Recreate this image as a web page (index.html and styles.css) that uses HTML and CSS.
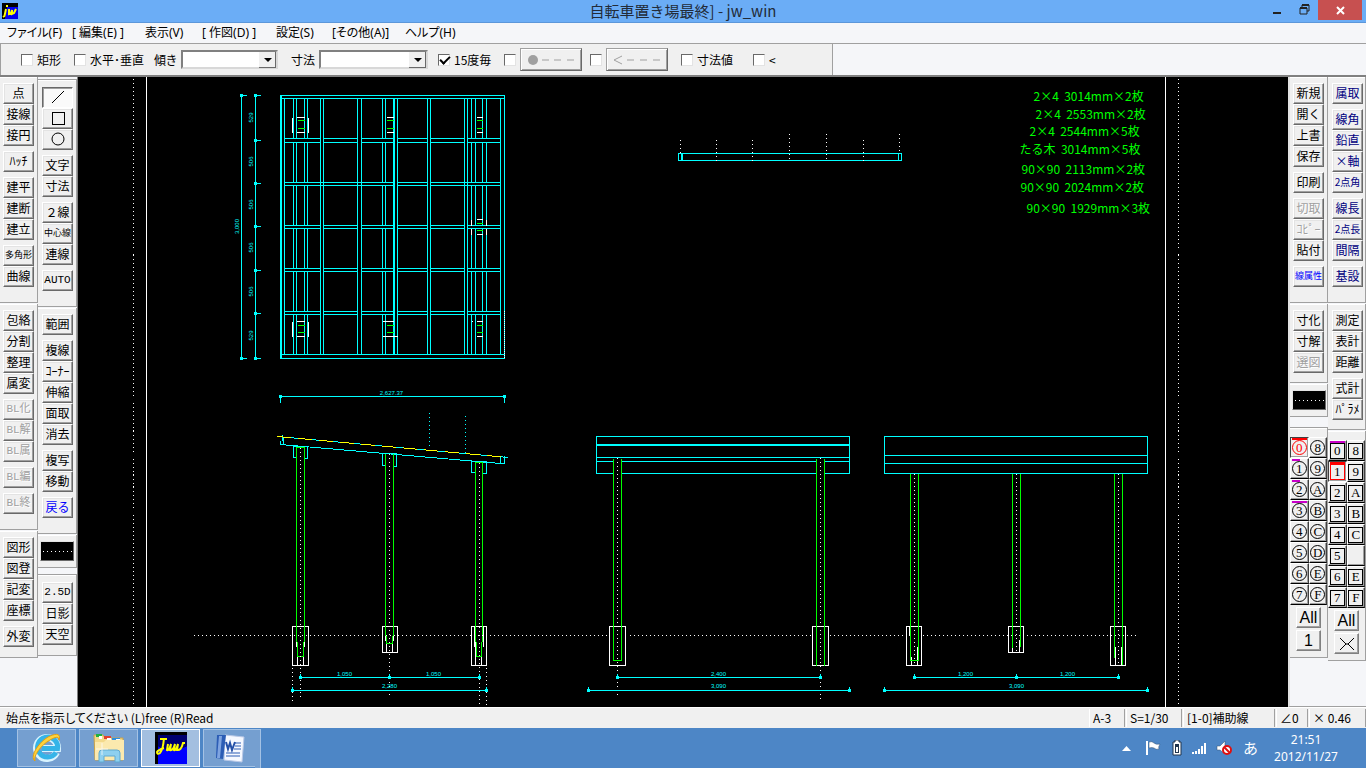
FILE: index.html
```html
<!DOCTYPE html>
<html lang="ja">
<head>
  <meta charset="UTF-8" />
  <meta name="viewport" content="width=device-width, initial-scale=1.0"/>
  <title>自転車置き場最終] - jw_win</title>
  <link rel="stylesheet" href="styles.css">
</head>
<body>

  <header class="titlebar">
    <svg class="app-icon" viewBox="0 0 16 16">
      <rect width="16" height="16" fill="#000"/>
      <path d="M5 4h11v12H3z" fill="#0000f0"/>
      <path d="M4 3h2M4 6L2.500 13L1 14M7 6l0 5l2-1l1-3l0 4l2-1l2-4" fill="none" stroke="#ff0" stroke-width="2"/>
    </svg>
    <h1>自転車置き場最終] - jw_win</h1>
    <div class="window-buttons">
      <button aria-label="最小化"><svg width="10" height="10"><path d="M0 8h8" stroke="#222" stroke-width="2"/></svg></button>
      <button aria-label="元に戻す"><svg width="12" height="12"><path d="M3 3V1h7v6H8M1 4h7v6H1z" fill="none" stroke="#222"/><path d="M3 1h7M1 4h7" stroke="#222" stroke-width="2"/></svg></button>
      <button class="close" aria-label="閉じる"><svg width="9" height="9"><path d="M1 1l7 7M8 1L1 8" stroke="#fff" stroke-width="2"/></svg></button>
    </div>
  </header>

  <nav class="menu">
    <a href="#">ファイル(F)</a>
    <a href="#">[ 編集(E) ]</a>
    <a href="#">表示(V)</a>
    <a href="#">[ 作図(D) ]</a>
    <a href="#">設定(S)</a>
    <a href="#">[その他(A)]</a>
    <a href="#">ヘルプ(H)</a>
  </nav>

  <div class="options-row">
    <form class="options">
      <label><input type="checkbox">矩形</label>
      <label><input type="checkbox">水平･垂直</label>
      <label class="combo">傾き<span class="select angle"><select><option></option></select></span></label>
      <label class="combo">寸法<span class="select size"><select><option></option></select></span></label>
      <label><input type="checkbox" checked>15度毎</label>
      <div class="toggle"><input type="checkbox" aria-label="端点"><button type="button" disabled aria-label="点"><svg width="48" height="12"><circle cx="6" cy="6" r="5" fill="#a0a0a0"/><path d="M15 6h7M27 6h7M40 6h7" stroke="#a0a0a0"/></svg></button></div>
      <div class="toggle"><input type="checkbox" aria-label="矢印"><button type="button" disabled aria-label="矢"><svg width="48" height="12"><path d="M9 2L1 6l8 4M14 6h7M27 6h7M40 6h7" fill="none" stroke="#a0a0a0"/></svg></button></div>
      <label><input type="checkbox">寸法値</label>
      <label><input type="checkbox">&lt;</label>
    </form>
  </div>

  <main class="workspace">
    <aside class="column left-outer">
      <section class="panel">
        <div class="group"><button>点</button><button>接線</button><button>接円</button></div>
        <div class="group"><button>ﾊｯﾁ</button></div>
        <div class="group"><button>建平</button><button>建断</button><button>建立</button></div>
        <div class="group"><button class="small">多角形</button><button>曲線</button></div>
      </section>
      <section class="panel">
        <div class="group"><button>包絡</button><button>分割</button><button>整理</button><button>属変</button></div>
        <div class="group"><button class="latin" disabled>BL化</button><button class="latin" disabled>BL解</button><button class="latin" disabled>BL属</button></div>
        <div class="group"><button class="latin" disabled>BL編</button></div>
        <div class="group"><button class="latin" disabled>BL終</button></div>
      </section>
      <section class="panel short">
        <div class="group"><button>図形</button><button>図登</button><button>記変</button><button>座標</button></div>
        <div class="group"><button>外変</button></div>
      </section>
    </aside>

    <aside class="column left-inner">
      <section class="panel topped">
        <div class="group">
          <button class="pressed" aria-label="線"><svg width="14" height="14"><path d="M1 13L13 1" stroke="#000"/></svg></button>
          <button aria-label="矩形"><svg width="14" height="14" shape-rendering="crispEdges"><path d="M1 1h12v12H1z" fill="none" stroke="#000"/></svg></button>
          <button aria-label="円"><svg width="14" height="14"><circle cx="7" cy="7" r="6" fill="none" stroke="#000"/></svg></button>
        </div>
        <div class="group"><button>文字</button><button>寸法</button></div>
        <div class="group"><button>２線</button><button class="small">中心線</button><button>連線</button></div>
        <div class="group"><button class="latin">AUTO</button></div>
      </section>
      <section class="panel">
        <div class="group"><button>範囲</button></div>
        <div class="group"><button>複線</button><button>ｺｰﾅｰ</button><button>伸縮</button><button>面取</button><button>消去</button></div>
        <div class="group"><button>複写</button><button>移動</button></div>
        <div class="group"><button class="blue">戻る</button></div>
      </section>
      <section class="panel swatch-panel"><button class="swatch" aria-label="線種"></button></section>
      <div class="spacer"></div>
      <section class="panel topped short">
        <div class="group"><button class="latin">2.5D</button><button>日影</button><button>天空</button></div>
      </section>
    </aside>

    <!-- drawing coordinates are window pixels -->
    <svg class="canvas" viewBox="77.500 76.500 1210 630" preserveAspectRatio="xMidYMid meet">
      <defs>
        <g id="node"><rect x="-1.500" y="-1.500" width="3" height="3" fill="#0ff" stroke="none"/></g>
      </defs>

      <!-- sheet edges -->
      <path class="white" d="M146 76V707M1165 76V707"/>
      <path class="white dots" d="M133 78V707M1178 78V707"/>

      <!-- plan -->
      <g class="cyan">
        <path d="M280 95H504V358H280zM281 95V358M280 98H504M280 354H504M284 98V354M500 98V354"/>
        <path d="M320 98V354M323 98V354M357 98V354M361 98V354M393 98V354M394 98V354M397 98V354M427 98V354M430 98V354M464 98V354M467 98V354"/>
        <path d="M284 138H320M323 138H357M361 138H393M397 138H427M430 138H464M467 138H500M284 142H320M323 142H357M361 142H393M397 142H427M430 142H464M467 142H500"/>
        <path d="M284 182H393M397 182H427M430 182H500M284 185H393M397 185H427M430 185H500"/>
        <path d="M284 225H320M323 225H357M361 225H393M397 225H427M430 225H464M467 225H500M284 228H320M323 228H357M361 228H393M397 228H427M430 228H464M467 228H500"/>
        <path d="M284 268H320M323 268H357M361 268H393M397 268H427M430 268H464M467 268H500M284 271H320M323 271H357M361 271H393M397 271H427M430 271H464M467 271H500"/>
        <path d="M284 311H320M323 311H357M361 311H393M397 311H427M430 311H464M467 311H500M284 314H320M323 314H357M361 314H393M397 314H427M430 314H464M467 314H500"/>
        <path d="M293 98V138M293 142V182M293 185V225M293 228V268M293 271V311M293 314V354M296 98V138M296 142V182M296 185V225M296 228V268M296 271V311M296 314V354"/>
        <path d="M304 98V138M304 142V182M304 185V225M304 228V268M304 271V311M304 314V354M307 98V138M307 142V182M307 185V225M307 228V268M307 271V311M307 314V354"/>
        <path d="M382 98V138M382 142V182M382 185V225M382 228V268M382 271V311M382 314V354M385 98V138M385 142V182M385 185V225M385 228V268M385 271V311M385 314V354"/>
        <path d="M471 98V138M471 142V182M471 185V225M471 228V268M471 271V311M471 314V354M475 98V138M475 142V182M475 185V225M475 228V268M475 271V311M475 314V354"/>
        <path d="M482 98V138M482 142V182M482 185V225M482 228V268M482 271V311M482 314V354M486 98V138M486 142V182M486 185V225M486 228V268M486 271V311M486 314V354"/>
      </g>
      <path class="white" d="M292 117V132M308 117V132M296 117H304M296 132H304M386 117H393M386 132H393M476 117H482M476 132H482M292 321V336M308 321V336M296 321H304M296 336H304M382 321H393M382 336H397M471 321H472M476 321H482M476 336H482M471 219V225M486 219V225M471 228V234M486 228V234M476 219H482M476 234H482"/>
      <path class="green" d="M297 120H304M297 128H304M386 120H393M386 128H393M476 120H482M476 128H482M297 325H304M297 332H304M386 325H393M386 332H393M476 325H482M476 332H482M476 223H482M476 230H482"/>
      <path class="white fine" d="M504 310V358"/>

      <!-- plan dimensions -->
      <g class="cyan">
        <path d="M241 95V358M255 95V358M241 95h5M241 358h5M255 95h5M255 140h5M255 183h5M255 226h5M255 270h5M255 313h5M255 358h5M280 396H504M280 396v6M504 396v6"/>
        <use href="#node" x="241" y="95"/><use href="#node" x="241" y="358"/>
        <use href="#node" x="255" y="95"/><use href="#node" x="255" y="140"/><use href="#node" x="255" y="183"/><use href="#node" x="255" y="226"/>
        <use href="#node" x="255" y="270"/><use href="#node" x="255" y="313"/><use href="#node" x="255" y="358"/>
        <use href="#node" x="280" y="396"/><use href="#node" x="504" y="396"/>
      </g>
      <g class="dim">
        <text transform="translate(252 117) rotate(-90)">529</text>
        <text transform="translate(252 161) rotate(-90)">506</text>
        <text transform="translate(252 204) rotate(-90)">506</text>
        <text transform="translate(252 247) rotate(-90)">506</text>
        <text transform="translate(252 291) rotate(-90)">506</text>
        <text transform="translate(252 335) rotate(-90)">529</text>
        <text transform="translate(238 226) rotate(-90)">3,000</text>
        <text x="391" y="394">2,627.37</text>
      </g>

      <!-- rafter -->
      <path class="cyan" d="M678 153H901V160H678zM681 153V160M682 153V160M898 153V160"/>
      <path class="white dots" d="M680 139V152M716 139V160M752 139V160M789 133V160M826 133V160M863 139V160M899 133V152"/>

      <!-- side elevation -->
      <g class="cyan">
        <path d="M277 436L508 457M280 444L500 463M280 444V440M283 436V444M282 434V440M500 455V463H504V455"/>
        <path d="M296 457H293V446H307V458H304M385 465H382V453H396V466H393M475 472H471V461H486V473H482"/>
      </g>
      <path class="yellow" d="M277 436L508 457"/>
      <path class="cyan dots" d="M429 412V448M465 415V452"/>
      <path class="white" d="M292 626H308V665H292zM297 656V665M303 656V665M296 641V646M304 641V646M382 626H397V652H382zM386 643V652M392 643V652M385 635V640M393 635V640M471 626H486V665H471zM474 626V646M483 626V646M475 641V665M481 641V665"/>
      <path class="green" d="M296 641V447H304V641M297 641V656H303V641M385 635V453M393 453V635M386 635V643H392V635M475 641V462H482V641M476 641V656H481V641"/>
      <path class="white dots" d="M300 447V696M389 453V695M479 462V706M292 667V700M486 667V704"/>
      <path class="white dots" d="M193 635H606M629 635H810M829 635H904M922 635H1138"/>

      <!-- front elevation -->
      <path class="cyan" d="M596 473V436H849V473M596 444H849M596 445H849M596 457H849M596 461H613M621 461H816M824 461H849M596 473H613M621 473H816M824 473H849"/>
      <path class="white" d="M609 626H625V665H609zM812 626H828V665H812z"/>
      <path class="green" d="M613 458V660H621V458M816 458V665M824 458V665"/>
      <path class="white dots" d="M617 457V694M820 457V701"/>

      <!-- rear elevation -->
      <path class="cyan" d="M884 436H1147V473H884zM884 455H1147M884 463H1147"/>
      <path class="white" d="M906 626H921V665H906zM909 626V635M911 656V665M917 646V665M1008 626H1023V652H1008zM1012 647V652M1019 639V652M1110 626H1125V665H1110zM1115 646V665M1121 646V665"/>
      <path class="green" d="M910 473V660H918V473M1012 473V647M1020 473V646M1114 473V657M1122 473V664"/>
      <path class="white dots" d="M914 473V665M1016 473V652M1118 473V665"/>

      <!-- elevation dimensions -->
      <g class="cyan">
        <path d="M300 677H479M300 677v-4M389 677v-4M479 677v-4M292 690H486M292 690v-4M486 690v-4"/>
        <path d="M617 677H820M617 677v-4M820 677v-4M588 690H849M588 690v-4M849 690v-4"/>
        <path d="M914 677H1118M914 677v-4M1016 677v-4M1118 677v-4M884 690H1147M884 690v-4M1147 690v-4"/>
        <use href="#node" x="300" y="677"/><use href="#node" x="389" y="677"/><use href="#node" x="479" y="677"/>
        <use href="#node" x="292" y="690"/><use href="#node" x="486" y="690"/>
        <use href="#node" x="617" y="677"/><use href="#node" x="820" y="677"/><use href="#node" x="588" y="690"/><use href="#node" x="849" y="690"/>
        <use href="#node" x="914" y="677"/><use href="#node" x="1016" y="677"/><use href="#node" x="1118" y="677"/>
        <use href="#node" x="884" y="690"/><use href="#node" x="1147" y="690"/>
      </g>
      <g class="dim">
        <text x="344" y="675">1,050</text><text x="433" y="675">1,050</text><text x="389" y="687">2,280</text>
        <text x="718" y="675">2,400</text><text x="718" y="687">3,090</text>
        <text x="965" y="675">1,200</text><text x="1067" y="675">1,200</text><text x="1016" y="687">3,090</text>
      </g>

      <!-- cutting list -->
      <g class="list">
        <text x="1033" y="100">2×4&nbsp; 3014mm×2枚</text>
        <text x="1035" y="118">2×4&nbsp; 2553mm×2枚</text>
        <text x="1029" y="135">2×4&nbsp; 2544mm×5枚</text>
        <text x="1019" y="153">たる木&nbsp; 3014mm×5枚</text>
        <text x="1021" y="173">90×90&nbsp; 2113mm×2枚</text>
        <text x="1020" y="191">90×90&nbsp; 2024mm×2枚</text>
        <text x="1026" y="212">90×90&nbsp; 1929mm×3枚</text>
      </g>
    </svg>

    <aside class="column right-inner">
      <section class="panel">
        <div class="group"><button>新規</button><button>開く</button><button>上書</button><button>保存</button></div>
        <div class="group"><button>印刷</button></div>
        <div class="group"><button disabled>切取</button><button disabled>ｺﾋﾟｰ</button><button>貼付</button></div>
        <div class="group"><button class="small blue">線属性</button></div>
      </section>
      <section class="panel tight">
        <div class="group"><button>寸化</button><button>寸解</button><button disabled>選図</button></div>
      </section>
      <section class="panel swatch-panel"><button class="swatch" aria-label="線属性"></button></section>
      <div class="spacer"></div>
      <section class="panel layers">
        <div class="layer-grid round">
          <button class="current bar"><span>0</span></button><button><span>8</span></button>
          <button class="bar half"><span>1</span></button><button><span>9</span></button>
          <button class="bar half"><span>2</span></button><button><span>A</span></button>
          <button class="bar"><span>3</span></button><button><span>B</span></button>
          <button><span>4</span></button><button><span>C</span></button>
          <button><span>5</span></button><button><span>D</span></button>
          <button><span>6</span></button><button><span>E</span></button>
          <button><span>7</span></button><button><span>F</span></button>
        </div>
        <button class="all">All</button>
        <button class="all">1</button>
      </section>
    </aside>

    <aside class="column right-outer">
      <section class="panel navy">
        <div class="group"><button>属取</button></div>
        <div class="group"><button>線角</button><button>鉛直</button><button>×軸</button><button class="mixed">2点角</button></div>
        <div class="group"><button>線長</button><button class="mixed">2点長</button><button>間隔</button></div>
        <div class="group"><button>基設</button></div>
      </section>
      <section class="panel tight">
        <div class="group"><button>測定</button><button>表計</button><button>距離</button></div>
        <div class="group"><button>式計</button><button>ﾊﾟﾗﾒ</button></div>
      </section>
      <section class="panel layers">
        <div class="layer-grid">
          <button class="bar"><span>0</span></button><button><span>8</span></button>
          <button class="current bar"><span>1</span></button><button><span>9</span></button>
          <button><span>2</span></button><button><span>A</span></button>
          <button><span>3</span></button><button><span>B</span></button>
          <button><span>4</span></button><button><span>C</span></button>
          <button><span>5</span></button><button aria-label="D"></button>
          <button><span>6</span></button><button><span>E</span></button>
          <button><span>7</span></button><button><span>F</span></button>
        </div>
        <button class="all">All</button>
        <button class="all" aria-label="×"><svg width="16" height="14"><path d="M1 1l6 6l-6 6M15 1l-6 6l6 6M7 7h2" fill="none" stroke="#000"/></svg></button>
      </section>
    </aside>
  </main>

  <footer class="status">
    <p>始点を指示してください (L)free (R)Read</p>
    <span>A-3</span>
    <span>S=1/30</span>
    <span>[1-0]補助線</span>
    <span>∠0</span>
    <span>× 0.46</span>
  </footer>

  <div class="taskbar">
    <button aria-label="Internet Explorer">
      <svg width="32" height="32" viewBox="0 0 32 32">
        <path d="M25.500 20.500A10.500 10.500 0 1 1 26.500 16.500H11" fill="none" stroke="#d9f4ff" stroke-width="7"/>
        <path d="M25 20.500A10 10 0 1 1 26.500 16.500H11" fill="none" stroke="#35b4e8" stroke-width="5"/>
        <path d="M4 29C-2 25 8 9 19 4c7-3 11-2 9 4C28 4 24 5 19 8 10 13 2 24 4 29z" fill="#ffd23c" stroke="#e3a010"/>
      </svg>
    </button>
    <button aria-label="エクスプローラー">
      <svg width="34" height="32" viewBox="0 0 34 32">
        <path d="M2 3h9l2 3h18v22H3z" fill="#f3d98a" stroke="#c9a24a"/>
        <path d="M4 2h6v3H4z" fill="#20b040"/><path d="M12 4h7v3h-7z" fill="#e04030"/><path d="M20 6h8v3h-8z" fill="#2d8fe0"/>
        <path d="M7 4h3v3H7zM15 6h4v2h-4zM24 7h4v2h-4z" fill="#fff"/>
        <path d="M3 10h9l2-2h18v20H3z" fill="#fbe9ae"/>
        <path d="M7 30V21q0-3 3-3h15q3 0 3 3v9h-5v-6H12v6z" fill="#8ed0ef" stroke="#5fa9d0"/>
        <path d="M10 11v12M4 17h12" stroke="#fff" opacity=".7"/>
      </svg>
    </button>
    <button class="active" aria-label="Jww">
      <svg width="32" height="32" viewBox="0 0 32 32">
        <path d="M0 0h32v32H0z"/><path d="M3 14q13 8 29 0v18H3z" fill="#0000ff"/>
        <path d="M3 3h29v11q-14 8-29 0z" fill="#000070"/>
        <path d="M5 7h7M9 6q-1 12-4 15q-3 2-3-1q1-2 7-4M13 12l-1 6q2 1 4-6l-1 6q3 1 5-6M20 12l-1 6q2 1 4-6l-1 6q4 1 6-7h2" fill="none" stroke="#ff0" stroke-width="2"/>
      </svg>
    </button>
    <button class="stacked" aria-label="Word">
      <svg width="30" height="30" viewBox="0 0 30 30">
        <path d="M10 2l19 2-2 25-18-2z" fill="#f5f8ff" stroke="#b9c8e6"/>
        <path d="M2 2h9L8 26l-7-1z" fill="#2c5db5"/><path d="M4 3h3L5 25H2z" fill="#7fa4e0"/>
        <path d="M11 9l2 7 2-6 2 7 3-8" fill="none" stroke="#2450a8" stroke-width="2"/>
        <path d="M20 10h6M20 13h6M19 16h7M11 20h14M11 23h14" stroke="#2c5db5"/>
      </svg>
    </button>
    <div class="tray">
      <svg class="more" width="9" height="5"><path d="M0 5L4.500 0L9 5z" fill="#fff"/></svg>
      <svg width="18" height="16"><path d="M2 1v14" stroke="#fff" stroke-width="2"/><path d="M4 2q3-1 5 1q2 2 6 1q-2 3-1 5q-3 1-5-1q-2-1-5 0z" fill="#fff" stroke="#34506e" stroke-width=".5"/></svg>
      <svg width="10" height="16"><path d="M3 0h4v2h2v13H1V2h2z" fill="#fff" stroke="#20344c"/><path d="M3 4h4v9H3z" fill="#20344c"/><path d="M4 7h2v5H4z" fill="#fff"/></svg>
      <svg width="16" height="12"><path d="M1 12v-2h2v2zM4 12V9h2v3zM7 12V7h2v5zM10 12V4h2v8zM13 12V1h2v11z" fill="#fff"/></svg>
      <svg width="18" height="16"><path d="M1 6h3l5-5v13l-5-4H1z" fill="#fff" stroke="#34506e" stroke-width=".5"/><circle cx="11" cy="10" r="4" fill="#fff" stroke="#e01010" stroke-width="2"/><path d="M8 7l6 6" stroke="#e01010" stroke-width="2"/></svg>
      <span class="ime">あ</span>
      <time>21:51<br>2012/11/27</time>
    </div>
  </div>

</body>
</html>
```

FILE: styles.css
```css
* {
  box-sizing: border-box;
}

body {
  margin: 0;
  min-height: 100vh;
  display: flex;
  flex-direction: column;
  font-family: "Noto Sans CJK JP", sans-serif;
  font-size: 12px;
  line-height: 16px;
  color: #000;
  background: #f5f6f9;
}

button {
  font: inherit;
  color: inherit;
  padding: 0;
  margin: 0;
  border: none;
  background: none;
  display: flex;
  align-items: center;
  justify-content: center;
  white-space: nowrap;
}

svg {
  display: block;
  flex: none;
}

/* title bar */
.titlebar {
  height: 23px;
  display: grid;
  grid-template-columns: 120px 1fr 120px;
  align-items: center;
  background: #6badf6;
  border-bottom: 1px solid #5c97da;
}

.app-icon {
  width: 16px;
  height: 16px;
  margin-left: 2px;
}

.titlebar h1 {
  margin: 0;
  font-size: 15px;
  font-weight: 400;
  line-height: 22px;
  text-align: center;
  color: #222b38;
}

.window-buttons {
  align-self: start;
  display: flex;
  justify-content: flex-end;
  padding-right: 4px;
}

.window-buttons button {
  width: 27px;
  height: 20px;
}

.window-buttons .close {
  width: 44px;
  background: #c75050;
}

/* menu */
.menu {
  height: 21px;
  display: grid;
  grid-template-columns: 65px 73px 57px 74px 56px 73px auto;
  align-items: center;
  padding-left: 7px;
  border-bottom: 1px solid #a0a0a0;
  font-family: "Noto Sans", "Noto Sans CJK JP", sans-serif;
  font-feature-settings: "palt";
}

.menu a {
  color: #000;
  text-decoration: none;
  white-space: pre;
}

/* option bar */
.options-row {
  height: 33px;
  border-bottom: 2px solid #808080;
}

.options {
  width: 833px;
  height: 31px;
  display: grid;
  grid-template-columns: 53px 80px 137px 147px 66px 86px 91px 72px 1fr;
  align-items: center;
  padding-left: 20px;
  background: #f0f0f0;
  border-left: 1px solid #a0a0a0;
  border-right: 1px solid #a0a0a0;
}

.options label,
.toggle {
  display: flex;
  align-items: center;
  gap: 4px;
  white-space: nowrap;
  font-feature-settings: "palt";
}

.options input {
  appearance: none;
  flex: none;
  width: 12px;
  height: 12px;
  margin: 0;
  background: #fff;
  border: 1px solid;
  border-color: #696969 #e3e3e3 #e3e3e3 #696969;
}

.options input:checked::after {
  content: "";
  display: block;
  width: 8px;
  height: 4px;
  margin: 1px;
  border-left: 2px solid #000;
  border-bottom: 2px solid #000;
  transform: rotate(-45deg);
}

.toggle button {
  width: 62px;
  height: 23px;
  background: #f0f0f0;
  border: 1px solid;
  border-color: #a0a0a0 #696969 #696969 #a0a0a0;
  box-shadow: inset 1px 1px #fff, inset -1px -1px #a0a0a0;
}

.select {
  position: relative;
  height: 19px;
}

.angle {
  width: 97px;
}

.size {
  width: 109px;
}

.select select {
  appearance: none;
  display: block;
  width: 100%;
  height: 19px;
  margin: 0;
  border: 2px solid;
  border-color: #808080 #d8d8d8 #d8d8d8 #808080;
  border-radius: 0;
  background: #fff;
}

.select::before {
  content: "";
  position: absolute;
  top: 2px;
  right: 2px;
  width: 16px;
  height: 15px;
  background: #f0f0f0;
  border-right: 1px solid #696969;
  border-bottom: 1px solid #696969;
  pointer-events: none;
}

.select::after {
  content: "";
  position: absolute;
  top: 8px;
  right: 6px;
  border: 4px solid transparent;
  border-top-color: #000;
  border-bottom: none;
  pointer-events: none;
}

/* work area */
.workspace {
  flex: 1;
  display: grid;
  grid-template-columns: 38px 40px 1fr 40px 38px;
}

.column {
  border-bottom: 1px solid #a0a0a0;
}

.left-inner {
  padding-top: 2px;
  border-right: 1px solid #808080;
}

.right-inner {
  border-left: 2px solid #e3e3e3;
}

.panel {
  padding: 6px 0 15px 3px;
  background: #f0f0f0;
  border-right: 1px solid #a0a0a0;
  border-bottom: 1px solid #a0a0a0;
  box-shadow: inset 0 1px #fff;
  margin-bottom: 1px;
}

.left-inner .panel,
.right-outer .panel {
  padding-left: 4px;
}

.panel.short {
  padding-bottom: 10px;
}

.panel.tight {
  padding-bottom: 9px;
}

.panel.topped {
  padding-top: 7px;
  border-top: 1px solid #a0a0a0;
}

.group + .group {
  margin-top: 5px;
}

.group button {
  width: 31px;
  height: 21px;
  padding-bottom: 2px;
  line-height: 16px;
  background: #f0f0f0;
  border: 1px solid;
  border-color: #fff #696969 #696969 #fff;
  box-shadow: inset -1px -1px #a0a0a0, inset 1px 1px #e3e3e3;
}

.group .pressed {
  background: #fafafa;
  border-color: #696969 #fff #fff #696969;
  box-shadow: inset 1px 1px #a0a0a0;
}

.group button:disabled {
  color: #a0a0a0;
  text-shadow: 1px 1px #fff;
}

.group .small {
  font-size: 9px;
}

.group .mixed {
  font-size: 10px;
}

.group .latin {
  font-family: "Liberation Mono", "Noto Sans CJK JP", monospace;
  font-size: 11px;
}

.group .blue {
  color: #00f;
}

.navy {
  color: #000080;
}

.left-inner .swatch-panel,
.swatch-panel {
  padding: 6px 0 6px 2px;
}

.swatch {
  width: 34px;
  height: 20px;
  background: #000;
  border: 1px solid;
  border-color: #e3e3e3 #696969 #696969 #e3e3e3;
}

.swatch::after {
  content: "";
  width: 29px;
  height: 1px;
  background: repeating-linear-gradient(90deg, #fff 0 1px, #000 1px 4px);
}

.spacer {
  height: 5px;
}

.right-inner .spacer {
  height: 9px;
}

/* layer buttons */
.right-inner .layers,
.right-outer .layers {
  padding: 9px 0 4px;
}

.right-inner .layers {
  border-top: 1px solid #a0a0a0;
}

.layer-grid {
  display: grid;
  grid-template-columns: 1fr 1fr;
  margin-bottom: 2px;
}

.layer-grid button {
  position: relative;
  height: 21px;
  background: #f0f0f0;
  border: 1px solid;
  border-color: #fff #404040 #000 #fff;
  box-shadow: inset -1px -1px #a0a0a0;
}

.layer-grid span {
  width: 15px;
  height: 16px;
  border: 1px solid #000;
  font-family: "Liberation Serif", serif;
  font-size: 13px;
  line-height: 14px;
  text-align: center;
}

.round span {
  height: 15px;
  line-height: 13px;
  border-radius: 8px;
}

.layer-grid .bar::before {
  content: "";
  position: absolute;
  top: 0;
  left: 1px;
  width: 15px;
  height: 2px;
  background: #c800c8;
}

.layer-grid .half::before {
  width: 8px;
}

.layer-grid .current {
  border-color: #404040 #fff #fff #404040;
}

.layer-grid .current::before {
  background: #f00;
}

.layer-grid .current span {
  border-color: #f00;
}

.round .current span {
  color: #f00;
}

.all {
  width: 25px;
  height: 21px;
  margin: 0 0 2px 6px;
  font-size: 16px;
  font-family: "Liberation Sans", sans-serif;
  background: #f0f0f0;
  border: 1px solid;
  border-color: #fff #808080 #808080 #fff;
  box-shadow: inset -1px -1px #a0a0a0;
}

/* drawing */
.canvas {
  width: 100%;
  height: 100%;
  background: #000;
  shape-rendering: crispEdges;
  fill: none;
  stroke-width: 1;
}

.cyan {
  stroke: #0ff;
}

.green {
  stroke: #0f0;
}

.white {
  stroke: #fff;
}

.yellow {
  stroke: #ff0;
  stroke-dasharray: 14 7;
}

.dots {
  stroke-dasharray: 1 3;
}

.fine {
  stroke-dasharray: 1 1;
}

.dim text {
  font-family: "Liberation Sans", sans-serif;
  font-size: 6px;
  fill: #0ff;
  text-anchor: middle;
}

.list text {
  font-size: 12px;
  fill: #0f0;
}

/* status bar */
.status {
  height: 21px;
  display: grid;
  grid-template-columns: 1fr 36px 56px 92px 32px 57px;
  align-items: center;
  gap: 1px;
  background: #f0f0f0;
  border-top: 1px solid #fff;
  font-feature-settings: "palt";
}

.status p {
  margin: 0;
  padding-left: 6px;
}

.status span {
  height: 18px;
  padding-left: 3px;
  line-height: 18px;
  white-space: nowrap;
  border-right: 1px solid #a0a0a0;
  border-left: 1px solid #fff;
}

/* taskbar */
.taskbar {
  height: 40px;
  display: flex;
  align-items: center;
  gap: 3px;
  padding-left: 17px;
  background: #4d86c6;
}

.taskbar button {
  position: relative;
  width: 59px;
  height: 38px;
  background: #759fd0;
  border: 1px solid #a4c2e4;
}

.taskbar .active {
  background: #a3bfe0;
  border-color: #fff;
}

.taskbar .stacked {
  width: 54px;
}

.stacked::after {
  content: "";
  position: absolute;
  top: -1px;
  right: -5px;
  width: 5px;
  height: 38px;
  background: #759fd0;
  border: 1px solid #a4c2e4;
  border-left: none;
}

.tray {
  margin-left: auto;
  display: flex;
  align-items: center;
  gap: 9px;
  padding-right: 21px;
  color: #fff;
}

.more {
  margin-right: 5px;
}

.ime {
  font-size: 15px;
}

.tray time {
  width: 78px;
  font-family: "Noto Sans", sans-serif;
  font-size: 12px;
  line-height: 17px;
  text-align: center;
}
```
